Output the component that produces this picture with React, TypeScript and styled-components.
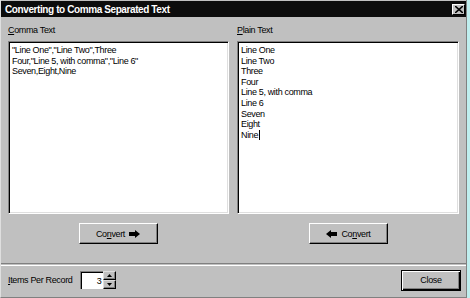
import React from 'react';
import styled, { createGlobalStyle } from 'styled-components';

const commaLines = ['"Line One","Line Two",Three', 'Four,"Line 5, with comma","Line 6"', 'Seven,Eight,Nine'];
const plainLines = ['Line One', 'Line Two', 'Three', 'Four', 'Line 5, with comma', 'Line 6', 'Seven', 'Eight', 'Nine'];

const RightArrow = () => (
    <svg width="12" height="8" viewBox="0 0 12 8">
        <polygon points="0,2 6,2 6,0 11,4 6,8 6,6 0,6" fill="#000" />
    </svg>
);

const LeftArrow = () => (
    <svg width="12" height="8" viewBox="0 0 12 8">
        <polygon points="12,2 6,2 6,0 1,4 6,8 6,6 12,6" fill="#000" />
    </svg>
);

const ConvertText = () => (
    <span>
        Co<Key>n</Key>vert
    </span>
);

const App = () => {
    return (
        <Window>
            <GlobalStyle />
            <TitleBar>
                <Title>Converting to Comma Separated Text</Title>
                <TitleClose>
                    <svg width="8" height="7" viewBox="0 0 8 7">
                        <path d="M0 0 L8 7 M8 0 L0 7" stroke="#000" strokeWidth="1.6" />
                    </svg>
                </TitleClose>
            </TitleBar>
            <Columns>
                <Column>
                    <Label>
                        <Key>C</Key>omma Text
                    </Label>
                    <TextBox>
                        {commaLines.map((line) => (
                            <Line key={line}>{line}</Line>
                        ))}
                    </TextBox>
                    <ButtonRow>
                        <Button>
                            <ConvertText />
                            <RightArrow />
                        </Button>
                    </ButtonRow>
                </Column>
                <Column>
                    <Label>
                        <Key>P</Key>lain Text
                    </Label>
                    <TextBox>
                        {plainLines.map((line, i) => (
                            <Line key={line}>
                                {line}
                                {i === plainLines.length - 1 && <Caret />}
                            </Line>
                        ))}
                    </TextBox>
                    <ButtonRow>
                        <Button>
                            <LeftArrow />
                            <ConvertText />
                        </Button>
                    </ButtonRow>
                </Column>
            </Columns>
            <Separator />
            <Footer>
                <Label>
                    <Key>I</Key>tems Per Record
                </Label>
                <Spinner>
                    <SpinEdit>3</SpinEdit>
                    <SpinButtons>
                        <SpinButton>
                            <svg width="5" height="3" viewBox="0 0 5 3">
                                <polygon points="0,3 2.5,0 5,3" fill="#000" />
                            </svg>
                        </SpinButton>
                        <SpinButton>
                            <svg width="5" height="3" viewBox="0 0 5 3">
                                <polygon points="0,0 2.5,3 5,0" fill="#000" />
                            </svg>
                        </SpinButton>
                    </SpinButtons>
                </Spinner>
                <Spacer />
                <DefaultButton>Close</DefaultButton>
            </Footer>
        </Window>
    );
};

const Window = styled.div`
    width: 467px;
    height: 298px;
    box-sizing: border-box;
    background: #c0c0c0;
    border-left: 1px solid #dfdfdf;
    border-bottom: 1px solid #808080;
    border-right: 1px solid #808080;
    display: flex;
    flex-direction: column;
    font-family: 'Liberation Sans', Arial, sans-serif;
    font-size: 9px;
    letter-spacing: -0.35px;
    color: #000;
`;

const TitleBar = styled.div`
    height: 16px;
    margin-top: 1px;
    background: #0c0c0c;
    display: flex;
    align-items: center;
    padding: 0 1px 0 4px;
`;

const Title = styled.div`
    flex: 1;
    color: #fff;
    font-weight: bold;
    font-size: 10px;
    letter-spacing: -0.4px;
`;

const TitleClose = styled.div`
    width: 13px;
    height: 11px;
    box-sizing: border-box;
    background: #c0c0c0;
    border-top: 1px solid #fff;
    border-left: 1px solid #fff;
    border-right: 1px solid #000;
    border-bottom: 1px solid #000;
    display: flex;
    align-items: center;
    justify-content: center;
`;

const Columns = styled.div`
    display: grid;
    grid-template-columns: 221px 222px;
    column-gap: 8px;
    padding: 6px 0 0 7px;
`;

const Column = styled.div`
    display: flex;
    flex-direction: column;
`;

const Label = styled.div`
    height: 14px;
    line-height: 14px;
    margin-bottom: 4px;
    white-space: nowrap;
`;

const Key = styled.span`
    text-decoration: underline;
`;

const TextBox = styled.div`
    height: 173px;
    box-sizing: border-box;
    background: #fff;
    border-top: 1px solid #808080;
    border-left: 1px solid #808080;
    border-right: 1px solid #fff;
    border-bottom: 1px solid #fff;
    box-shadow: inset 1px 1px 0 #000, inset -1px -1px 0 #dfdfdf;
    padding: 3px 3px;
    font-size: 9px;
`;

const Line = styled.div`
    height: 10.6px;
    line-height: 10.6px;
    white-space: pre;
`;

const Caret = styled.span`
    display: inline-block;
    width: 1px;
    height: 10px;
    background: #000;
    vertical-align: top;
    margin-left: 1px;
`;

const ButtonRow = styled.div`
    display: flex;
    justify-content: center;
    margin-top: 9px;
`;

const Button = styled.div`
    width: 79px;
    height: 21px;
    box-sizing: border-box;
    display: flex;
    align-items: center;
    justify-content: center;
    gap: 4px;
    border-top: 1px solid #fff;
    border-left: 1px solid #fff;
    border-right: 1px solid #000;
    border-bottom: 1px solid #000;
    box-shadow: inset -1px -1px 0 #808080;
`;

const Separator = styled.div`
    margin-top: 19px;
    height: 1px;
    border-top: 1px solid #808080;
    border-bottom: 1px solid #fff;
`;

const Footer = styled.div`
    flex: 1;
    display: flex;
    align-items: center;
    padding: 0 5px 3px 7px;

    ${Label} {
        margin-bottom: 0;
    }
`;

const Spinner = styled.div`
    display: flex;
    margin-left: 8px;
    height: 18px;
`;

const SpinEdit = styled.div`
    width: 23px;
    box-sizing: border-box;
    background: #fff;
    border-top: 1px solid #808080;
    border-left: 1px solid #808080;
    box-shadow: inset 1px 1px 0 #000;
    text-align: right;
    padding: 2px 2px 0 0;
    line-height: 14px;
`;

const SpinButtons = styled.div`
    width: 13px;
    display: flex;
    flex-direction: column;
`;

const SpinButton = styled.div`
    flex: 1;
    box-sizing: border-box;
    background: #c0c0c0;
    border-top: 1px solid #dfdfdf;
    border-left: 1px solid #dfdfdf;
    border-right: 1px solid #000;
    border-bottom: 1px solid #000;
    box-shadow: inset -1px -1px 0 #808080;
    display: flex;
    align-items: center;
    justify-content: center;
`;

const Spacer = styled.div`
    flex: 1;
`;

const DefaultButton = styled.div`
    width: 60px;
    height: 21px;
    box-sizing: border-box;
    border: 1px solid #000;
    box-shadow: inset 1px 1px 0 #fff, inset -1px -1px 0 #000, inset -2px -2px 0 #808080;
    display: flex;
    align-items: center;
    justify-content: center;
`;

const GlobalStyle = createGlobalStyle`
    body {
        margin: 0;
        background: #bfeeee;
    }
`;

export default App;
